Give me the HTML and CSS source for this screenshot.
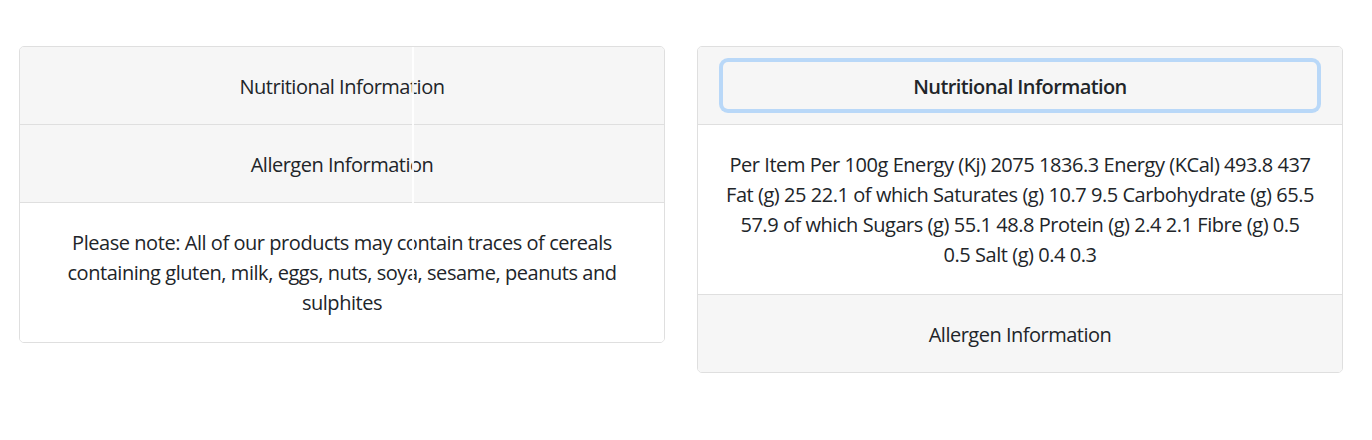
FILE: index.html
```html
<!DOCTYPE html>
<html lang="en">
<head>
<meta charset="utf-8">
<title>Nutritional Information</title>
<link rel="stylesheet" href="styles.css">
</head>
<body>
<div class="page">
  <div class="accordion">
    <div class="card">
      <div class="card-header"><button class="btn">Nutritional Information</button></div>
    </div>
    <div class="card">
      <div class="card-header"><button class="btn">Allergen Information</button></div>
      <div class="card-body">Please note: All of our products may contain traces of cereals containing gluten, milk, eggs, nuts, soya, sesame, peanuts and sulphites</div>
    </div>
    <span class="seam"></span>
  </div>
  <div class="accordion">
    <div class="card">
      <div class="card-header"><button class="btn btn-focus">Nutritional Information</button></div>
      <div class="card-body">Per Item Per 100g Energy (Kj) 2075 1836.3 Energy (KCal) 493.8 437 Fat (g) 25 22.1 of which Saturates (g) 10.7 9.5 Carbohydrate (g) 65.5 57.9 of which Sugars (g) 55.1 48.8 Protein (g) 2.4 2.1 Fibre (g) 0.5<br>0.5 Salt (g) 0.4 0.3</div>
    </div>
    <div class="card">
      <div class="card-header"><button class="btn">Allergen Information</button></div>
    </div>
  </div>
</div>
</body>
</html>
```
FILE: styles.css
```css
* { box-sizing: border-box; }
html, body { margin: 0; background: #fff; }
body {
  font-family: "Open Sans", "Noto Sans", sans-serif;
  font-size: 20px;
  line-height: 30px;
  color: #212529;
  letter-spacing: -0.45px;
}
.page {
  display: flex;
  gap: 32px;
  align-items: flex-start;
  padding: 46px 29px 0 19px;
}
.accordion {
  position: relative;
  width: 646px;
  border: 1px solid #dfdfdf;
  border-radius: 5px;
  overflow: hidden;
}
.card + .card { border-top: 1px solid #dfdfdf; }
.card-header {
  background: #f6f6f6;
  padding: 15px 25px;
}
.card-header + .card-body { border-top: 1px solid #dfdfdf; }
.btn {
  display: block;
  width: 100%;
  font: inherit;
  letter-spacing: -0.5px;
  color: inherit;
  background: transparent;
  border: 1px solid transparent;
  border-radius: 5px;
  padding: 9px 15px 6px;
  text-align: center;
  cursor: pointer;
}
.btn-focus {
  font-weight: 600;
  box-shadow: 0 0 0 4px #b9d8f8;
  letter-spacing: -0.6px;
}
.card-body {
  padding: 25px 25px 24px;
  text-align: center;
  background: #fff;
}
.seam {
  position: absolute;
  top: 0;
  bottom: 0;
  left: 392px;
  width: 2px;
  background: #fff;
  opacity: 0.9;
}
```
